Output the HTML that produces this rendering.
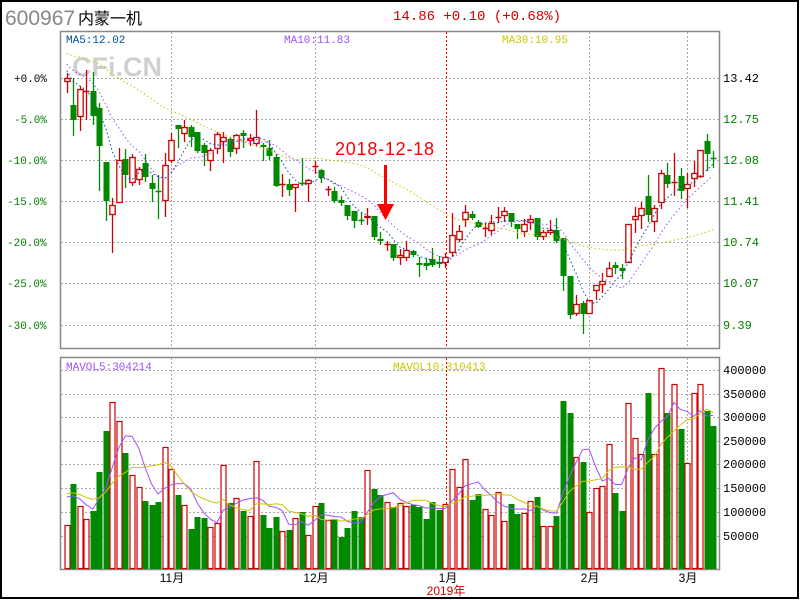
<!DOCTYPE html>
<html><head><meta charset="utf-8">
<style>
html,body{margin:0;padding:0;background:#fff;}
body{width:800px;height:600px;overflow:hidden;position:relative;}
</style></head><body>
<svg id="s" width="800" height="600" xmlns="http://www.w3.org/2000/svg" style="position:absolute;left:0;top:0" font-family="Liberation Mono, Noto Sans CJK SC, monospace">
<rect x="1" y="1" width="797" height="597" fill="#fff" stroke="#000" stroke-width="2"/>
<text x="5" y="25" style="font-family:'Liberation Sans',sans-serif;font-size:21px" fill="#888">600967</text>
<text x="78" y="24" style="font-family:'Noto Sans CJK SC',sans-serif;font-size:16px" fill="#000">内蒙一机</text>
<text x="393" y="20" font-size="14" fill="#d00000">14.86 +0.10 (+0.68%)</text>
<rect x="60.5" y="31.5" width="659" height="317" fill="none" stroke="#888" stroke-width="1.5"/>
<rect x="60.5" y="357.5" width="659" height="212" fill="none" stroke="#888" stroke-width="1.5"/>
<text x="72" y="76" style="font-family:'Liberation Sans',sans-serif;font-weight:bold;font-size:27px" fill="#d0d0d0">CFi.CN</text>
<g id="grid"></g>
<g id="chart"></g>
<text x="66" y="43" font-size="11" fill="#0050a0">MA5:12.02</text>
<text x="284" y="43" font-size="11" fill="#a050ff">MA10:11.83</text>
<text x="502" y="43" font-size="11" fill="#c8c800">MA30:10.95</text>
<text x="66" y="370" font-size="11" fill="#a050ff">MAVOL5:304214</text>
<text x="393" y="370" font-size="11" fill="#c8c800">MAVOL10:310413</text>
<text x="335" y="155" style="font-family:'Liberation Sans',sans-serif;font-size:18px" fill="#ff0000" textLength="99">2018-12-18</text>
<rect x="384" y="165" width="3" height="40" fill="#ff0000"/>
<polygon points="377,204 394,204 385.5,220" fill="#ff0000"/>
<g font-size="11">
<text x="14" y="82" fill="#000">+0.0%</text>
<text x="14" y="123" fill="#008000">-5.0%</text>
<text x="7" y="164" fill="#008000">-10.0%</text>
<text x="7" y="205" fill="#008000">-15.0%</text>
<text x="7" y="246" fill="#008000">-20.0%</text>
<text x="7" y="287" fill="#008000">-25.0%</text>
<text x="7" y="329" fill="#008000">-30.0%</text>
<g font-size="12">
<text x="723" y="82" fill="#000">13.42</text>
<text x="723" y="123" fill="#008000">12.75</text>
<text x="723" y="164" fill="#008000">12.08</text>
<text x="723" y="205" fill="#008000">11.41</text>
<text x="723" y="246" fill="#008000">10.74</text>
<text x="723" y="287" fill="#008000">10.07</text>
<text x="723" y="329" fill="#008000">9.39</text>
<text x="723" y="374" fill="#000">400000</text>
<text x="723" y="398" fill="#000">350000</text>
<text x="723" y="421" fill="#000">300000</text>
<text x="723" y="445" fill="#000">250000</text>
<text x="723" y="468" fill="#000">200000</text>
<text x="723" y="492" fill="#000">150000</text>
<text x="723" y="516" fill="#000">100000</text>
<text x="723" y="540" fill="#000">50000</text>
</g>
</g>
<g style="font-family:'Liberation Sans','Noto Sans CJK SC',sans-serif;font-size:12px" fill="#000" text-anchor="middle">
<text x="172" y="582">11月</text>
<text x="316" y="582">12月</text>
<text x="448" y="582">1月</text>
<text x="590" y="582">2月</text>
<text x="688" y="582">3月</text>
<text x="446" y="595" fill="#d00000">2019年</text>
</g>
</svg>
<script>
var NS="http://www.w3.org/2000/svg";
function el(p,t,a){var e=document.createElementNS(NS,t);for(var k in a)e.setAttribute(k,a[k]);p.appendChild(e);return e;}
var g=document.getElementById('grid'),c=document.getElementById('chart');
[78,119,160,201,242,283,325].forEach(function(y){el(g,'line',{x1:61,x2:719,y1:y+.5,y2:y+.5,stroke:'#aaa','stroke-dasharray':'2,2'});});
[370,394,417,441,464,488,512,536].forEach(function(y){el(g,'line',{x1:61,x2:719,y1:y+.5,y2:y+.5,stroke:'#aaa','stroke-dasharray':'2,2'});});
[171,315,589,687].forEach(function(x){
 el(g,'line',{x1:x+.5,x2:x+.5,y1:32,y2:348,stroke:'#aaa','stroke-dasharray':'2,2'});
 el(g,'line',{x1:x+.5,x2:x+.5,y1:358,y2:569,stroke:'#aaa','stroke-dasharray':'2,2'});});
el(g,'line',{x1:446.5,x2:446.5,y1:32,y2:348,stroke:'#f00','stroke-dasharray':'2,2'});
el(g,'line',{x1:446.5,x2:446.5,y1:358,y2:569,stroke:'#f00','stroke-dasharray':'2,2'});
var D=[
['r',78,82,73,93],['g',105,120,78,136],['r',89,117,86,131],['r',91,92,70,120],['g',91,116,72,125],
['g',108,146,103,191],['g',162,201,162,221],['r',205,215,198,253],['r',160,203,148,203],['g',159,175,149,188],
['r',157,183,154,186],['r',169,180,167,185],['g',163,177,154,182],['g',183,189,175,202],['g',191,191,175,219],
['r',165,201,153,217],['r',140,161,133,163],['g',125,129,125,148],['r',127,134,120,142],['g',127,137,125,147],
['g',132,151,132,153],['g',145,153,143,166],['r',150,161,148,171],['r',134,149,132,154],['r',137,142,132,163],
['g',139,152,137,157],['r',135,149,134,154],['g',133,136,130,148],['r',138,141,134,146],['r',137,144,110,147],
['g',145,147,143,161],['g',148,156,140,160],['g',157,186,154,187],['r',184,184,174,197],['g',184,190,179,196],
['r',184,188,184,212],['g',183,183,158,185],['r',180,184,179,202],['r',166,166,161,174],['g',170,178,169,183],
['r',189,189,186,196],['g',191,201,187,203],['g',200,203,196,206],['g',205,216,205,220],['g',211,221,211,228],
['g',220,220,213,225],['r',216,218,208,225],['g',216,237,216,240],['g',239,241,232,245],['r',244,244,241,251],
['g',244,258,244,261],['r',255,258,249,265],['r',250,258,241,261],['g',251,255,250,257],['g',263,265,257,277],
['g',263,266,258,270],['g',259,265,248,267],['g',262,264,256,268],['r',257,263,253,268],['r',235,253,213,257],
['r',231,240,225,242],['r',212,220,205,227],['g',214,218,211,220],['g',222,227,220,228],['r',228,228,223,237],
['r',223,231,215,235],['r',217,217,207,223],['r',211,216,207,222],['g',213,222,213,227],['g',224,229,224,239],
['r',224,232,219,237],['r',219,223,215,230],['g',218,237,218,240],['r',232,237,230,240],['r',230,233,220,235],
['g',230,241,218,243],['g',238,276,238,291],['g',276,315,276,319],['r',304,314,295,316],['g',303,314,301,334],
['r',300,314,300,314],['r',285,291,285,300],['r',281,285,273,293],['r',268,277,262,277],['g',265,268,262,274],
['g',268,271,264,279],['r',224,263,224,263],['r',216,220,207,233],['r',208,216,202,229],['g',196,215,175,222],
['r',208,222,205,232],['r',173,203,170,209],['g',175,184,163,188],['r',182,182,153,196],['g',176,191,168,199],
['r',184,189,173,208],['r',173,179,161,187],['r',150,177,150,178],['g',141,154,134,171],['g',158,158,151,168]];
var V=[525,484,506,519,511,472,431,402,421,453,475,487,501,505,502,447,469,495,505,529,517,518,527,523,465,503,498,511,516,461,515,528,517,531,530,518,512,535,506,503,520,519,537,528,511,517,470,489,495,502,507,503,506,505,507,519,502,510,504,469,487,459,500,494,509,515,492,521,504,514,513,501,497,526,526,516,401,413,457,462,512,488,486,444,493,511,403,438,454,393,454,368,413,384,429,463,393,384,411,426];
var X=function(i){return 66.7+6.53*i;};
var closes=D.map(function(d){return d[0]=='r'?d[1]:d[2];});
var pre=[];for(var k=0;k<30;k++)pre.push(k<20?48:50+(k-20)*2.5);
var allC=pre.concat(closes);
var vpre=[];for(k=0;k<10;k++)vpre.push(490);
var allV=vpre.concat(V);
function ma(arr,off,n,i){var s=0;for(var j=0;j<n;j++)s+=arr[off+i-j];return s/n;}
function line(arr,off,n,col,dash){
 var pts=[];for(var i=0;i<100;i++){var y=ma(arr,off,n,i);pts.push(X(i).toFixed(1)+','+y.toFixed(1));}
 var a={points:pts.join(' '),fill:'none',stroke:col,'stroke-width':1};
 if(dash)a['stroke-dasharray']=dash;
 el(c,'polyline',a);
}
D.forEach(function(d,i){
 var x=X(i),col=d[0]=='r'?'#d00000':'#008a00';
 var cx=Math.round(x)+.5;
 el(c,'line',{x1:cx,x2:cx,y1:d[3],y2:d[4],stroke:col,'stroke-width':1.3});
 var h=d[2]-d[1];
 if(h<1.5){el(c,'line',{x1:cx-3,x2:cx+3,y1:d[1]+.5,y2:d[1]+.5,stroke:col,'stroke-width':1.5});}
 else if(d[0]=='r'){el(c,'rect',{x:cx-2.7,y:d[1]+.5,width:5.4,height:h-1,fill:'#fff',stroke:col,'stroke-width':1.3});}
 else{el(c,'rect',{x:cx-3,y:d[1],width:6,height:h,fill:col});}
});
line(allC,30,5,'#0050a0','1.5,2.5');
line(allC,30,10,'#a050ff','1.5,2.5');
line(allC,30,30,'#c8c800','1.5,2.5');
V.forEach(function(t,i){
 var x=Math.round(X(i));
 if(D[i][0]=='r'){el(c,'rect',{x:x-2,y:t+.5,width:5,height:569-t-1,fill:'#fff',stroke:'#d00000','stroke-width':1.2});}
 else{el(c,'rect',{x:x-2.5,y:t,width:6,height:569-t,fill:'#008a00'});}
});
line(allV,10,5,'#a050ff',null);
line(allV,10,10,'#c8c800',null);
</script>
</body></html>
